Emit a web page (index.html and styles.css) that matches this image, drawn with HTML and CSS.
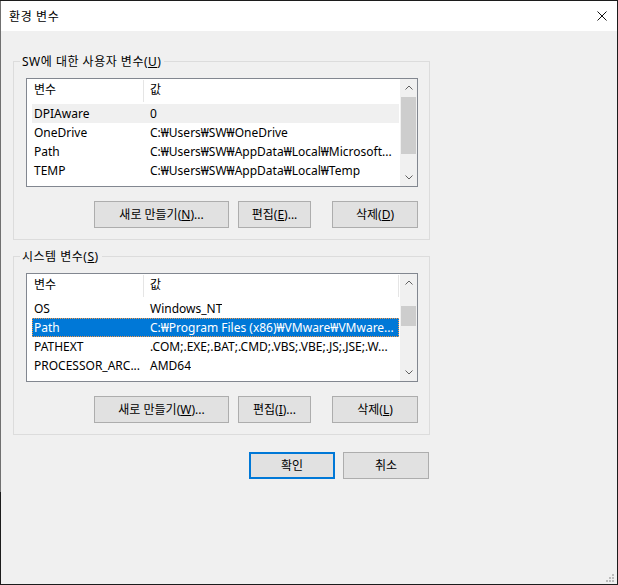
FILE: index.html
```html
<!DOCTYPE html>
<html lang="ko">

<head>
    <meta charset="UTF-8">
    <meta name="viewport" content="width=device-width, initial-scale=1.0">
    <title>환경 변수</title>
    <link rel="stylesheet" href="styles.css">
</head>

<body>
    <div class="window">
        <div class="titlebar">
            <span class="title">환경 변수</span>
            <span class="close">
                <svg width="10" height="10" viewBox="0 0 10 10">
                    <path d="M0.5 0.5 L9.5 9.5 M9.5 0.5 L0.5 9.5" stroke="#111" stroke-width="1" fill="none" />
                </svg>
            </span>
        </div>

        <div class="content">
            <div class="group">
                <span class="group-label">SW에 대한 사용자 변수(<u>U</u>)</span>
                <div class="list">
                    <div class="list-main">
                        <div class="list-head">
                            <span class="head-name">변수</span>
                            <span class="head-value">값</span>
                        </div>
                        <div class="row soft">
                            <span class="cell-name">DPIAware</span>
                            <span class="cell-value">0</span>
                        </div>
                        <div class="row">
                            <span class="cell-name">OneDrive</span>
                            <span class="cell-value">C:₩Users₩SW₩OneDrive</span>
                        </div>
                        <div class="row">
                            <span class="cell-name">Path</span>
                            <span class="cell-value">C:₩Users₩SW₩AppData₩Local₩Microsoft...</span>
                        </div>
                        <div class="row">
                            <span class="cell-name">TEMP</span>
                            <span class="cell-value">C:₩Users₩SW₩AppData₩Local₩Temp</span>
                        </div>
                    </div>
                    <div class="scrollbar">
                        <span class="sb-btn">
                            <svg width="8" height="5" viewBox="0 0 8 5"><path d="M0.5 4.5 L4 1 L7.5 4.5" stroke="#606060" fill="none" /></svg>
                        </span>
                        <span class="sb-thumb user-thumb"></span>
                        <span class="sb-btn down">
                            <svg width="8" height="5" viewBox="0 0 8 5"><path d="M0.5 0.5 L4 4 L7.5 0.5" stroke="#606060" fill="none" /></svg>
                        </span>
                    </div>
                </div>
                <div class="buttons">
                    <span class="btn btn-new">새로 만들기(<u>N</u>)...</span>
                    <span class="btn btn-edit">편집(<u>E</u>)...</span>
                    <span class="btn btn-del">삭제(<u>D</u>)</span>
                </div>
            </div>

            <div class="group system">
                <span class="group-label">시스템 변수(<u>S</u>)</span>
                <div class="list">
                    <div class="list-main">
                        <div class="list-head">
                            <span class="head-name">변수</span>
                            <span class="head-value edge">값</span>
                        </div>
                        <div class="row">
                            <span class="cell-name">OS</span>
                            <span class="cell-value">Windows_NT</span>
                        </div>
                        <div class="row selected">
                            <span class="cell-name">Path</span>
                            <span class="cell-value">C:₩Program Files (x86)₩VMware₩VMware...</span>
                        </div>
                        <div class="row">
                            <span class="cell-name">PATHEXT</span>
                            <span class="cell-value">.COM;.EXE;.BAT;.CMD;.VBS;.VBE;.JS;.JSE;.W...</span>
                        </div>
                        <div class="row">
                            <span class="cell-name">PROCESSOR_ARC...</span>
                            <span class="cell-value">AMD64</span>
                        </div>
                    </div>
                    <div class="scrollbar">
                        <span class="sb-btn">
                            <svg width="8" height="5" viewBox="0 0 8 5"><path d="M0.5 4.5 L4 1 L7.5 4.5" stroke="#606060" fill="none" /></svg>
                        </span>
                        <span class="sb-thumb system-thumb"></span>
                        <span class="sb-btn down">
                            <svg width="8" height="5" viewBox="0 0 8 5"><path d="M0.5 0.5 L4 4 L7.5 0.5" stroke="#606060" fill="none" /></svg>
                        </span>
                    </div>
                </div>
                <div class="buttons">
                    <span class="btn btn-new">새로 만들기(<u>W</u>)...</span>
                    <span class="btn btn-edit">편집(<u>I</u>)...</span>
                    <span class="btn btn-del">삭제(<u>L</u>)</span>
                </div>
            </div>

            <div class="dialog-buttons">
                <span class="btn btn-ok">확인</span>
                <span class="btn btn-cancel">취소</span>
            </div>
        </div>

        <svg class="grip" width="9" height="9" viewBox="0 0 9 9">
            <rect x="6" y="0" width="2" height="2" fill="#bcbcbc" />
            <rect x="3" y="3" width="2" height="2" fill="#bcbcbc" />
            <rect x="6" y="3" width="2" height="2" fill="#bcbcbc" />
            <rect x="0" y="6" width="2" height="2" fill="#bcbcbc" />
            <rect x="3" y="6" width="2" height="2" fill="#bcbcbc" />
            <rect x="6" y="6" width="2" height="2" fill="#bcbcbc" />
        </svg>
    </div>
</body>

</html>
```

FILE: styles.css
```css
* {
    margin: 0;
    padding: 0;
    box-sizing: border-box;
}

body {
    font-family: "Noto Sans", "Noto Sans CJK KR", sans-serif;
    font-size: 12px;
    color: #000;
    background-color: #f0f0f0;
}

u {
    text-decoration: underline;
    text-underline-offset: 1px;
}

.window {
    width: 618px;
    height: 585px;
    border: 1px solid #1c1c1c;
    background-color: #f0f0f0;
    position: relative;
}

/* 왼쪽 테두리 윗부분만 회색 */
.window::before {
    content: "";
    position: absolute;
    left: -1px;
    top: 0;
    width: 1px;
    height: 491px;
    background-color: #707070;
}

.titlebar {
    height: 30px;
    background-color: #fff;
    display: flex;
    align-items: center;
    justify-content: space-between;
    padding-left: 8px;
}

.title {
    line-height: 17px;
    letter-spacing: 0.6px;
}

.close {
    display: flex;
    margin-right: 10px;
}

.content {
    padding-left: 12px;
}

.group {
    width: 417px;
    margin-top: 30px;
    border: 1px solid #dcdcdc;
    padding-bottom: 11px;
}

.group.system {
    margin-top: 16px;
}

.group-label {
    display: block;
    width: max-content;
    height: 17px;
    line-height: 17px;
    margin: -9px 0 0 6px;
    padding: 0 3px 0 2px;
    background-color: #f0f0f0;
    letter-spacing: 0.5px;
}

.list {
    display: flex;
    width: 392px;
    height: 109px;
    margin: 8px 0 0 12px;
    border: 1px solid #828790;
    background-color: #fff;
}

.list-main {
    flex: 1;
    overflow: hidden;
}

.list-head {
    display: flex;
    height: 25px;
}

.head-name,
.head-value {
    height: 22px;
    margin-top: 1px;
    padding-top: 1px;
    line-height: 17px;
}

.head-name {
    width: 117px;
    padding-left: 7px;
    border-right: 1px solid #e5e5e5;
}

.head-value {
    padding-left: 6px;
}

.head-value.edge {
    width: 255px;
    border-right: 1px solid #e5e5e5;
}

.row {
    display: flex;
    height: 19px;
    line-height: 19px;
    margin: 0 1px 0 5px;
    white-space: nowrap;
}

.cell-name {
    width: 111px;
    padding-left: 2px;
    overflow: hidden;
}

.cell-value {
    padding-left: 7px;
    overflow: hidden;
}

.row.soft {
    background-color: #f0f0f0;
}

.row.selected {
    background-color: #0078d7;
    color: #fff;
    outline: 1px dotted #f39a4b;
    outline-offset: -1px;
}

.scrollbar {
    width: 17px;
    background-color: #f0f0f0;
    display: flex;
    flex-direction: column;
}

.sb-btn {
    height: 17px;
    display: flex;
    align-items: center;
    justify-content: center;
}

.sb-btn.down {
    margin-top: auto;
}

.sb-thumb {
    display: block;
    margin: 0 1px;
    background-color: #cdcdcd;
}

.user-thumb {
    margin-top: 1px;
    height: 57px;
}

.system-thumb {
    margin-top: 15px;
    height: 20px;
}

.buttons {
    display: flex;
    justify-content: flex-end;
    margin-top: 14px;
    padding-right: 11px;
}

.btn {
    display: flex;
    align-items: center;
    justify-content: center;
    height: 27px;
    background-color: #e1e1e1;
    border: 1px solid #adadad;
    padding-bottom: 1px;
    white-space: nowrap;
}

.btn-new {
    width: 135px;
}

.btn-edit {
    width: 73px;
    margin-left: 9px;
}

.btn-del {
    width: 86px;
    margin-left: 21px;
}

.dialog-buttons {
    display: flex;
    justify-content: flex-end;
    gap: 8px;
    width: 417px;
    margin-top: 17px;
    padding-right: 1px;
}

.btn-ok,
.btn-cancel {
    width: 86px;
}

.btn-ok {
    border: 2px solid #0078d7;
}

.grip {
    position: absolute;
    right: 2px;
    bottom: 1px;
}
```
